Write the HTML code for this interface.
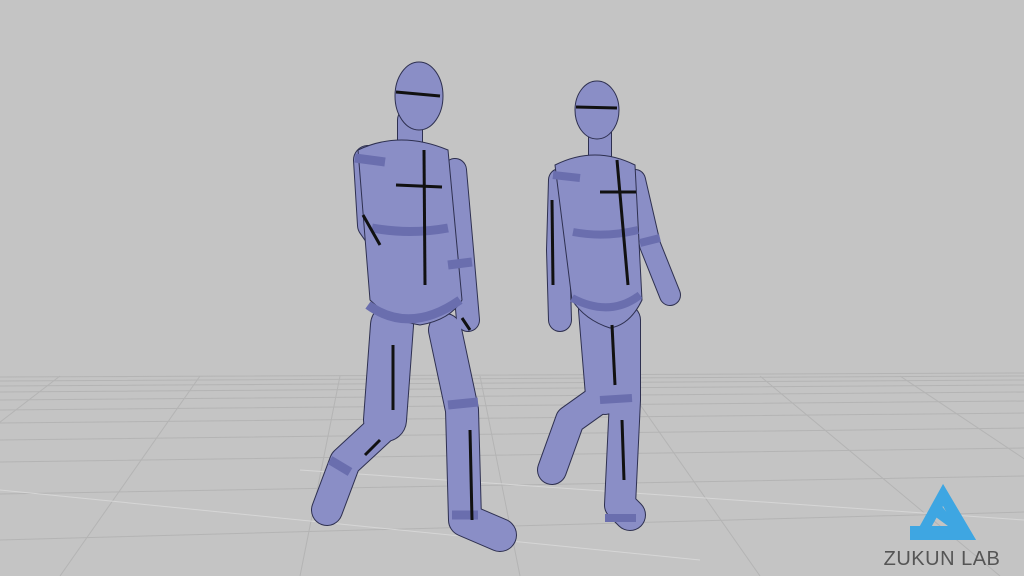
<!DOCTYPE html>
<html><head><meta charset="utf-8"><style>
html,body{margin:0;padding:0;background:#c4c4c4;}
svg{display:block}
</style></head><body>
<svg width="1024" height="576" viewBox="0 0 1024 576" xmlns="http://www.w3.org/2000/svg">
<rect width="1024" height="576" fill="#c4c4c4"/>
<!-- floor grid -->
<g stroke="#b4b4b4" stroke-width="1" fill="none">
<path d="M0 377 L1024 373 M0 381 L1024 376 M0 386 L1024 380 M0 392 L1024 385 M0 400 L1024 392 M0 410 L1024 401 M0 423 L1024 413 M0 440 L1024 428 M0 462 L1024 448 M0 494 L1024 476 M0 540 L1024 512"/>
<path d="M60 376 L-200 576 M200 376 L60 576 M340 376 L300 576 M480 376 L520 576 M620 376 L760 576 M760 376 L1000 576 M900 376 L1200 576"/>
</g>
<g stroke="#d6d6d6" stroke-width="1" fill="none"><path d="M0 490 L700 560 M300 470 L1024 520"/></g>
<!-- figure 1 -->
<g stroke-linecap="round" stroke-linejoin="round" fill="none">
 <g stroke="#2e3050">
  <path d="M385 425 L345 462 L327 510" stroke-width="32"/>
  <path d="M392 325 L385 420" stroke-width="44"/>
  <path d="M445 330 L462 410 L465 520 L500 535" stroke-width="34"/>
  <path d="M368 160 L372 225 L400 265" stroke-width="30"/>
  <path d="M455 170 L462 250 L468 320" stroke-width="24"/>
  <path d="M410 120 L410 150" stroke-width="26"/>
 </g>
 <g stroke="#8a8ec6">
  <path d="M385 425 L345 462 L327 510" stroke-width="30"/>
  <path d="M392 325 L385 420" stroke-width="42"/>
  <path d="M445 330 L462 410 L465 520 L500 535" stroke-width="32"/>
  <path d="M368 160 L372 225 L400 265" stroke-width="28"/>
  <path d="M455 170 L462 250 L468 320" stroke-width="22"/>
  <path d="M410 120 L410 150" stroke-width="24"/>
 </g>
</g>
<path d="M358 150 Q400 130 448 150 L462 300 Q450 320 420 325 Q390 320 370 300 Z" fill="#8a8ec6" stroke="#2e3050" stroke-width="1"/>
<ellipse cx="419" cy="96" rx="24" ry="34" fill="#8a8ec6" stroke="#2e3050" stroke-width="1"/>
<g stroke="#6a6eae" stroke-width="9" fill="none">
 <path d="M372 228 Q410 235 448 228"/><path d="M368 305 Q410 335 460 300"/>
 <path d="M448 405 L478 402"/><path d="M452 515 L478 515"/><path d="M330 460 L350 472"/>
 <path d="M355 158 L385 162"/><path d="M448 265 L472 262"/>
</g>
<g stroke="#111" stroke-width="3" fill="none">
 <path d="M396 92 L440 96"/><path d="M424 150 L425 285"/><path d="M396 185 L442 187"/>
 <path d="M363 215 L380 245"/><path d="M462 318 L470 330"/><path d="M393 345 L393 410"/>
 <path d="M470 430 L472 520"/><path d="M365 455 L380 440"/>
</g>
<!-- figure 2 -->
<g stroke-linecap="round" stroke-linejoin="round" fill="none">
 <g stroke="#2e3050">
  <path d="M605 395 L570 420 L552 470" stroke-width="30"/>
  <path d="M598 310 L605 395" stroke-width="40"/>
  <path d="M625 320 L625 400 L620 505 L630 515" stroke-width="32"/>
  <path d="M560 180 L558 250 L560 320" stroke-width="24"/>
  <path d="M635 180 L650 245 L670 295" stroke-width="22"/>
  <path d="M600 130 L600 160" stroke-width="24"/>
 </g>
 <g stroke="#8a8ec6">
  <path d="M605 395 L570 420 L552 470" stroke-width="28"/>
  <path d="M598 310 L605 395" stroke-width="38"/>
  <path d="M625 320 L625 400 L620 505 L630 515" stroke-width="30"/>
  <path d="M560 180 L558 250 L560 320" stroke-width="22"/>
  <path d="M635 180 L650 245 L670 295" stroke-width="20"/>
  <path d="M600 130 L600 160" stroke-width="22"/>
 </g>
</g>
<path d="M555 165 Q595 145 635 165 L642 300 Q630 325 610 328 Q585 320 572 300 Z" fill="#8a8ec6" stroke="#2e3050" stroke-width="1"/>
<ellipse cx="597" cy="110" rx="22" ry="29" fill="#8a8ec6" stroke="#2e3050" stroke-width="1"/>
<g stroke="#6a6eae" stroke-width="8" fill="none">
 <path d="M573 232 Q605 238 638 230"/><path d="M572 298 Q610 318 640 295"/>
 <path d="M600 400 L632 398"/><path d="M605 518 L636 518"/><path d="M553 175 L580 178"/>
 <path d="M640 243 L660 238"/>
</g>
<g stroke="#111" stroke-width="3" fill="none">
 <path d="M576 107 L617 108"/><path d="M617 160 L628 285"/><path d="M600 192 L636 192"/>
 <path d="M552 200 L553 285"/><path d="M612 325 L615 385"/><path d="M622 420 L624 480"/>
</g>
<!-- logo -->
<path d="M943 484 L976 540 L910 540 L910 526 L948 526 L933 515 L940 504 L958 526 L944 500 Z" fill="#3ea6e2"/>
<path d="M943 484 L976 540 L962 540 L943 506 L928 533 L916 533 Z" fill="#3ea6e2"/>
<text x="942" y="565" text-anchor="middle" font-family="Liberation Sans, sans-serif" font-size="20" fill="#555" letter-spacing="0.5">ZUKUN LAB</text>
</svg>
</body></html>
